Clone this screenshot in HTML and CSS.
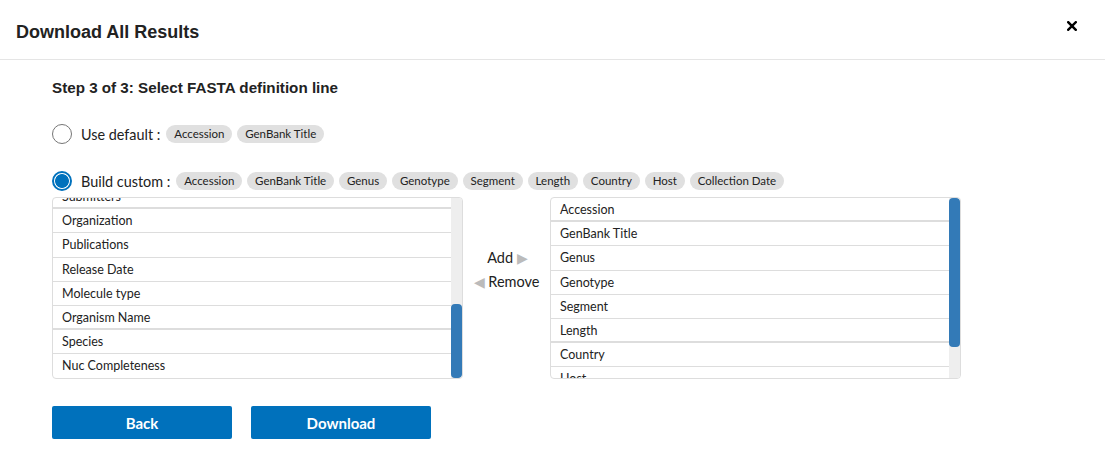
FILE: index.html
```html
<!DOCTYPE html>
<html>
<head>
<meta charset="utf-8">
<link rel="stylesheet" href="styles.css">
</head>
<body>
<div class="modal">
  <div class="modal-header">
    <h1 class="title">Download All Results</h1>
    <svg class="close" width="10" height="10" viewBox="0 0 10 10" aria-label="Close">
      <path d="M1.2 1.2 L8.8 8.8 M8.8 1.2 L1.2 8.8" stroke="#000" stroke-width="2.4" stroke-linecap="square"/>
    </svg>
  </div>
  <div class="modal-body">
    <div class="step">Step 3 of 3: Select FASTA definition line</div>
    <div class="option">
      <span class="radio"></span>
      <span class="opt-label">Use default :</span>
      <span class="pill">Accession</span>
      <span class="pill">GenBank Title</span>
    </div>
    <div class="option option-custom">
      <span class="radio radio-on"></span>
      <span class="opt-label">Build custom :</span>
      <span class="pill">Accession</span>
      <span class="pill">GenBank Title</span>
      <span class="pill">Genus</span>
      <span class="pill">Genotype</span>
      <span class="pill">Segment</span>
      <span class="pill">Length</span>
      <span class="pill">Country</span>
      <span class="pill">Host</span>
      <span class="pill">Collection Date</span>
    </div>
    <div class="picker">
      <div class="listbox">
        <div class="list-view">
          <ul class="items items-left">
            <li class="item item-strong">Submitters</li>
            <li class="item">Organization</li>
            <li class="item">Publications</li>
            <li class="item">Release Date</li>
            <li class="item">Molecule type</li>
            <li class="item item-strong">Organism Name</li>
            <li class="item">Species</li>
            <li class="item">Nuc Completeness</li>
          </ul>
        </div>
        <div class="track"><div class="thumb thumb-left"></div></div>
      </div>
      <div class="moves">
        <div class="move move-add">Add <span class="arrow">&#9654;</span></div>
        <div class="move"><span class="arrow">&#9664;</span> Remove</div>
      </div>
      <div class="listbox">
        <div class="list-view">
          <ul class="items">
            <li class="item item-strong">Accession</li>
            <li class="item">GenBank Title</li>
            <li class="item">Genus</li>
            <li class="item">Genotype</li>
            <li class="item">Segment</li>
            <li class="item item-strong">Length</li>
            <li class="item">Country</li>
            <li class="item">Host</li>
          </ul>
        </div>
        <div class="track"><div class="thumb thumb-right"></div></div>
      </div>
    </div>
    <div class="actions">
      <button class="btn">Back</button>
      <button class="btn">Download</button>
    </div>
  </div>
</div>
</body>
</html>
```

FILE: styles.css
```css
* { box-sizing: border-box; }
body {
  margin: 0;
  background: #fff;
  font-family: "Lato", "Liberation Sans", sans-serif;
  color: #222;
}
.modal { width: 1105px; }
.modal-header {
  height: 60px;
  border-bottom: 1px solid #e5e5e5;
  display: flex;
  align-items: center;
  justify-content: space-between;
  padding: 0 28px 0 16px;
}
.title {
  margin: 0;
  font-family: "Liberation Sans", Arial, sans-serif;
  font-size: 18px;
  font-weight: bold;
  color: #222;
  padding-top: 5px;
}
.close {
  margin-top: -8px;
  flex: none;
}
.modal-body { padding: 19px 0 0 52px; }
.step {
  font-family: "Liberation Sans", Arial, sans-serif;
  font-weight: bold;
  font-size: 15.2px;
  color: #222;
  line-height: 18px;
}
.option {
  display: flex;
  align-items: center;
  margin-top: 26px;
  height: 22px;
}
.option-custom { margin-top: 25px; }
.radio {
  width: 20px;
  height: 20px;
  border: 1px solid #767676;
  border-radius: 50%;
  margin-right: 9px;
  flex: none;
}
.radio-on {
  border: 2px solid #0071bc;
  background: radial-gradient(circle, #0071bc 0 6.5px, #fff 7.3px);
}
.opt-label {
  font-size: 14.4px;
  color: #222;
  margin-right: 6px;
}
.pill {
  background: #e0e0e0;
  border-radius: 9px;
  font-size: 11.5px;
  color: #222;
  height: 18px;
  line-height: 18px;
  padding: 0 7.9px;
  margin-right: 5px;
}
.picker {
  display: flex;
  margin-top: 5px;
  height: 182px;
}
.listbox {
  width: 411px;
  height: 182px;
  border: 1px solid #ddd;
  border-radius: 4px;
  display: flex;
  overflow: hidden;
}
.list-view {
  flex: 1;
  overflow: hidden;
}
.items {
  list-style: none;
  margin: 0;
  padding: 0;
}
.items-left { margin-top: -13px; }
.item {
  height: 24.2px;
  line-height: 23px;
  padding-left: 9px;
  font-size: 12.5px;
  color: #222;
  border-bottom: 1px solid #ddd;
}
.item-strong { border-bottom: 2px solid #ddd; }
.track {
  width: 11px;
  background: #eee;
  display: flex;
  flex-direction: column;
}
.thumb {
  background: #337ab7;
  border-radius: 4px;
}
.thumb-left { margin-top: 106px; flex: 1; }
.thumb-right { height: 149px; }
.moves {
  width: 87px;
  display: flex;
  flex-direction: column;
  align-items: center;
  justify-content: center;
  padding-bottom: 36px;
  font-size: 14.5px;
  color: #222;
}
.move { line-height: 23px; }
.move-add { margin-left: 2px; }
.arrow {
  color: #bbb;
  font-size: 13.5px;
}
.actions {
  display: flex;
  gap: 19px;
  margin-top: 27px;
}
.btn {
  width: 180px;
  height: 33px;
  background: #0071bc;
  color: #fff;
  border: none;
  border-radius: 2px;
  font-family: "Lato", "Liberation Sans", sans-serif;
  font-weight: bold;
  font-size: 15px;
}
```
